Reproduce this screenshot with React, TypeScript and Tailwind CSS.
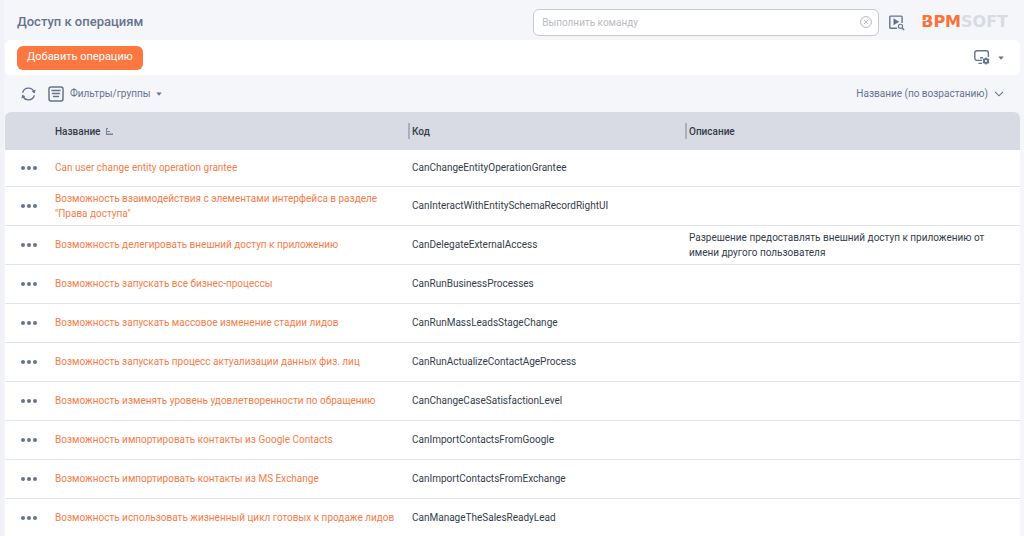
import React from "react";

type Operation = { name: string; code: string; description?: string };

const operations: Operation[] = [
  { name: "Can user change entity operation grantee", code: "CanChangeEntityOperationGrantee" },
  {
    name: 'Возможность взаимодействия с элементами интерфейса в разделе "Права доступа"',
    code: "CanInteractWithEntitySchemaRecordRightUI",
  },
  {
    name: "Возможность делегировать внешний доступ к приложению",
    code: "CanDelegateExternalAccess",
    description: "Разрешение предоставлять внешний доступ к приложению от имени другого пользователя",
  },
  { name: "Возможность запускать все бизнес-процессы", code: "CanRunBusinessProcesses" },
  { name: "Возможность запускать массовое изменение стадии лидов", code: "CanRunMassLeadsStageChange" },
  { name: "Возможность запускать процесс актуализации данных физ. лиц", code: "CanRunActualizeContactAgeProcess" },
  { name: "Возможность изменять уровень удовлетворенности по обращению", code: "CanChangeCaseSatisfactionLevel" },
  { name: "Возможность импортировать контакты из Google Contacts", code: "CanImportContactsFromGoogle" },
  { name: "Возможность импортировать контакты из MS Exchange", code: "CanImportContactsFromExchange" },
  { name: "Возможность использовать жизненный цикл готовых к продаже лидов", code: "CanManageTheSalesReadyLead" },
];

function Caret() {
  return (
    <svg width="6" height="4" viewBox="0 0 6 4" fill="currentColor" aria-hidden="true">
      <path d="M.2.4h5.600L3 3.700z" />
    </svg>
  );
}

function RefreshIcon() {
  return (
    <svg width="15" height="14" viewBox="0 0 15 14" fill="none" stroke="currentColor" strokeWidth="1.4" strokeLinecap="round" aria-hidden="true">
      <path d="M1.8 5.2A6 6 0 0 1 12.9 4.6M13.2 8.8A6 6 0 0 1 2.1 9.4" />
      <path d="M14.6 2.6l-.8 3.6-3.2-1.5zM.4 11.4l.8-3.6 3.2 1.5z" fill="currentColor" stroke="none" />
    </svg>
  );
}

function FilterIcon() {
  return (
    <svg width="16" height="16" viewBox="0 0 16 16" fill="none" stroke="currentColor" strokeWidth="1.5" strokeLinecap="round" aria-hidden="true">
      <rect x="1" y="1" width="14" height="14" rx="2" />
      <path d="M4 4.500h8M4.500 7.500h7M5.500 10.500h5" strokeWidth="1.400" />
    </svg>
  );
}

function RunSearchIcon() {
  return (
    <svg width="16" height="16" viewBox="0 0 16 16" fill="none" stroke="currentColor" strokeWidth="1.4" aria-hidden="true">
      <path d="M8 13.3H1.7a.9.9 0 0 1-.9-.9V2a.9.9 0 0 1 .9-.9h10.500a.9.9 0 0 1 .9.9v6" />
      <path d="M4.500 3.300v7l5.700-3.500z" fill="currentColor" stroke="none" />
      <circle cx="11.500" cy="11.300" r="2.100" strokeWidth="1.100" />
      <path d="M13.100 12.900l2 2" />
    </svg>
  );
}

function MonitorGearIcon() {
  return (
    <svg width="16" height="15" viewBox="0 0 16 15" fill="none" stroke="currentColor" strokeWidth="1.4" aria-hidden="true">
      <path d="M8 10.400H3A2.200 2.200 0 0 1 .8 8.200V3A2.200 2.200 0 0 1 3 .8h9.200A2.200 2.200 0 0 1 14.400 3v4M4.500 13.400h3.500M6 7.800h3" />
      <circle cx="12" cy="11" r="2" strokeWidth="1.900" />
      <path d="M12 7.400v1.400M12 13.200v1.400M8.900 9.200l1.200.7M13.900 12.100l1.200.7M8.900 12.800l1.200-.7M13.900 9.900l1.200-.7" strokeWidth="1.500" />
    </svg>
  );
}

function ColumnHeading({ children }: { children: React.ReactNode }) {
  return <div className="flex h-4 items-center border-l-2 border-[#a9afbf] pl-0.5">{children}</div>;
}

export default function App() {
  return (
    <div className="h-screen overflow-hidden border-l-4 border-[#f0f2f7] bg-[#f5f6fa] pr-1 pl-px font-['Roboto','Liberation_Sans',sans-serif] text-[#66738f]">
      <header className="flex h-10 items-center pt-1 pr-3 pl-3">
        <h1 className="flex-1 text-[13px] font-medium">Доступ к операциям</h1>
        <div className="flex h-[27px] w-1/3 max-w-[346px] min-w-40 shrink grow items-center rounded-md border border-[#c8cacd] bg-white pr-1.5 pl-2">
          <input
            aria-label="Выполнить команду"
            placeholder="Выполнить команду"
            className="min-w-0 flex-1 bg-transparent text-[10px] text-[#444c5c] outline-none placeholder:text-[#b9bbbf]"
          />
          <button aria-label="Очистить" className="text-[#aeb0b4]">
            <svg width="12" height="12" viewBox="0 0 12 12" fill="none" stroke="currentColor" strokeWidth=".9" aria-hidden="true">
              <circle cx="6" cy="6" r="5.400" />
              <path d="M3.800 3.800l4.400 4.400M8.200 3.800L3.800 8.200" />
            </svg>
          </button>
        </div>
        <button aria-label="Запустить процесс" className="mt-0.5 ml-2.5">
          <RunSearchIcon />
        </button>
        <a href="#" aria-label="BPMSoft" className="relative ml-4 flex items-center font-['DejaVu_Sans',sans-serif] text-base leading-4 font-bold">
          <span className="text-[#fb7239]">BPM</span>
          <span className="text-[#d9dbe2]">SOFT</span>
          <span className="absolute top-1.5 left-0 h-px w-1.5 bg-[#f5f6fa]" />
        </a>
      </header>

      <section className="flex h-[35px] items-center justify-between rounded-md bg-white pr-4 pl-3">
        <button className="h-6 rounded-md bg-[#fc7840] px-2.5 text-[11px] text-white">Добавить операцию</button>
        <button aria-label="Вид" className="flex items-center gap-2">
          <MonitorGearIcon />
          <Caret />
        </button>
      </section>

      <section className="flex h-[37px] items-center justify-between pr-4 pl-4 text-[10px]">
        <div className="flex items-center gap-3">
          <button aria-label="Обновить">
            <RefreshIcon />
          </button>
          <button className="flex items-center gap-1.5">
            <FilterIcon />
            <span>Фильтры/группы</span>
            <Caret />
          </button>
        </div>
        <button className="flex items-center gap-1.5">
          <span>Название (по возрастанию)</span>
          <svg width="10" height="6" viewBox="0 0 10 6" fill="none" stroke="currentColor" strokeWidth="1.100" aria-hidden="true">
            <path d="M1 .8l4 4 4-4" />
          </svg>
        </button>
      </section>

      <table className="w-full table-fixed border-collapse overflow-hidden rounded-t-md bg-white text-left text-[10px] leading-[15px] text-[#343c4c]">
        <colgroup>
          <col className="w-[50px]" />
          <col className="w-[353px]" />
          <col className="w-[277px]" />
          <col />
        </colgroup>
        <thead>
          <tr className="h-[38px] bg-[#d8dbe3]">
            <th aria-label="Действия" />
            <th className="p-0 font-medium">
              <button className="flex items-center gap-1.5">
                <span>Название</span>
                <svg width="7" height="7" viewBox="0 0 7 7" fill="#7a859d" aria-hidden="true">
                  <path d="M0 0h2v1H0zM0 3h4v1H0zM0 5.500h7V7H0zM0 0h1v7H0z" />
                </svg>
              </button>
            </th>
            <th className="p-0 font-medium">
              <ColumnHeading>Код</ColumnHeading>
            </th>
            <th className="p-0 font-medium">
              <ColumnHeading>Описание</ColumnHeading>
            </th>
          </tr>
        </thead>
        <tbody>
          {operations.map((op) => (
            <tr key={op.code} className="h-[39px] border-b border-[#e2e4eb] first:h-9">
              <td className="p-0 pl-4">
                <button aria-label="Меню записи" className="flex">
                  <svg width="16" height="4" viewBox="0 0 16 4" fill="#66738f" aria-hidden="true">
                    <circle cx="2" cy="2" r="2" />
                    <circle cx="8" cy="2" r="2" />
                    <circle cx="14" cy="2" r="2" />
                  </svg>
                </button>
              </td>
              <td className="p-0 pr-2 text-[#fa7c48]">
                <a href="#">{op.name}</a>
              </td>
              <td className="p-0 pl-1">{op.code}</td>
              <td className="p-0 pr-7 pl-1">{op.description}</td>
            </tr>
          ))}
        </tbody>
      </table>
    </div>
  );
}
